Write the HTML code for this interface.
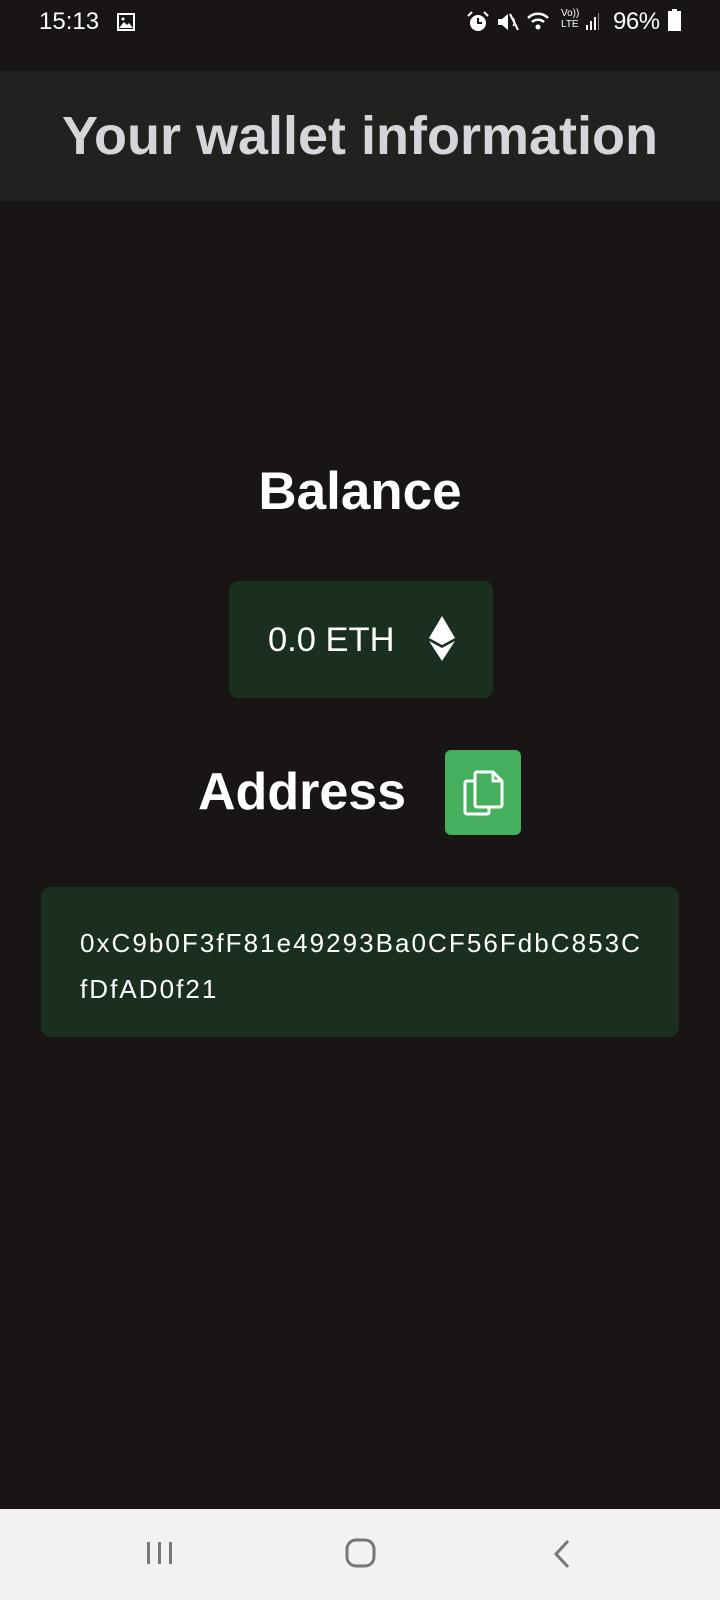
<!DOCTYPE html>
<html><head><meta charset="utf-8"><style>
*{margin:0;padding:0;box-sizing:border-box}
body{width:720px;height:1600px;background:#181514;font-family:"Liberation Sans",sans-serif;position:relative;overflow:hidden;color:#fff}
.abs{position:absolute}
.status{top:0;left:0;width:720px;height:71px;color:#fff;font-size:24px}
.header{top:71px;left:0;width:720px;height:130px;background:#232020}
.title{top:71px;left:0;width:720px;height:130px;line-height:130px;text-align:center;font-size:54px;font-weight:bold;color:#d6d5da;letter-spacing:0px}
.bal{top:462px;left:0;width:720px;text-align:center;font-size:53px;font-weight:bold;line-height:60px}
.balbox{top:581px;left:229px;width:264px;height:117px;background:#1a2f1f;border-radius:9px}
.addrbox{top:887px;left:41px;width:638px;height:150px;background:#1a2f1f;border-radius:9px}
.nav{top:1509px;left:0;width:720px;height:91px;background:#f2f2f2}
</style></head><body>
<div class="abs status">
 <div class="abs" style="left:39px;top:8px;font-size:24px">15:13</div>
 <svg class="abs" style="left:116px;top:12px" width="20" height="20" viewBox="0 0 20 20"><rect x="1" y="1" width="18" height="18" fill="#fff"/><rect x="3" y="3" width="14" height="14" fill="#181514"/><path d="M3 16 L8 10 L11 13 L13 11 L17 16Z" fill="#fff"/><circle cx="7" cy="7" r="1.5" fill="#fff"/></svg>
 <svg class="abs" style="left:466px;top:10px" width="24" height="24" viewBox="0 0 24 24"><circle cx="12" cy="13" r="8" fill="#fff"/><path d="M12 8 V13 H16" stroke="#181514" stroke-width="2" fill="none"/><path d="M2 6 L6 2 M22 6 L18 2" stroke="#fff" stroke-width="2"/></svg>
 <svg class="abs" style="left:496px;top:10px" width="24" height="24" viewBox="0 0 24 24"><path d="M2 9 H6 L12 4 V20 L6 15 H2Z" fill="#fff"/><path d="M14 4 L22 20" stroke="#fff" stroke-width="2"/><path d="M17 8 Q20 12 17 16" stroke="#fff" stroke-width="1.5" fill="none"/></svg>
 <svg class="abs" style="left:526px;top:10px" width="26" height="22" viewBox="0 0 26 22"><path d="M2 8 A14 14 0 0 1 22 8" stroke="#fff" stroke-width="2.5" fill="none"/><path d="M6 12 A9 9 0 0 1 18 12" stroke="#fff" stroke-width="2.5" fill="none"/><circle cx="12" cy="17" r="2.5" fill="#fff"/></svg>
 <div class="abs" style="left:561px;top:8px;font-size:10px;line-height:11px">Vo))<br>LTE</div>
 <svg class="abs" style="left:586px;top:12px" width="14" height="18"><rect x="0" y="13" width="2" height="5" fill="#fff"/><rect x="4" y="9" width="2" height="9" fill="#fff"/><rect x="8" y="5" width="2" height="13" fill="#fff"/><rect x="12" y="1" width="1" height="17" fill="#888"/></svg>
 <div class="abs" style="left:613px;top:8px;font-size:24px;letter-spacing:-0.5px">96%</div>
 <svg class="abs" style="left:668px;top:9px" width="13" height="22"><rect x="4" y="0" width="5" height="3" fill="#fff"/><rect x="0" y="2" width="13" height="20" fill="#fff"/></svg>
</div>
<div class="abs header"></div>
<div class="abs title">Your wallet information</div>
<div class="abs bal">Balance</div>
<div class="abs balbox"></div>
<div class="abs" style="top:621px;left:268px;font-size:34.5px;line-height:38px">0.0 ETH</div>
<svg class="abs" style="left:428px;top:616px" width="28" height="45" viewBox="0 0 28 45"><path d="M14 0 L27 22 L14 29 L1 22Z" fill="#fff"/><path d="M1 25 L14 32 L27 25 L14 45Z" fill="#fff"/></svg>
<div class="abs" style="top:762px;left:198px;font-size:52px;font-weight:bold;line-height:60px">Address</div>
<div class="abs" style="top:750px;left:445px;width:76px;height:85px;background:#44b05e;border-radius:6px"></div>
<svg class="abs" style="left:463px;top:770px" width="42" height="46" viewBox="0 0 42 46"><path d="M12 11 H4 A2 2 0 0 0 2 13 V42 A2 2 0 0 0 4 44 H24 A2 2 0 0 0 26 42 V37" stroke="#fff" stroke-width="3" fill="none"/><path d="M14 2 H30 L39 11 V35 A2 2 0 0 1 37 37 H14 A2 2 0 0 1 12 35 V4 A2 2 0 0 1 14 2Z M30 2 V11 H39" stroke="#fff" stroke-width="3" fill="none" stroke-linejoin="round"/></svg>
<div class="abs addrbox"></div>
<div class="abs" style="top:920px;left:80px;font-size:26px;line-height:46px;white-space:nowrap;letter-spacing:2.05px">0xC9b0F3fF81e49293Ba0CF56FdbC853C<br>fDfAD0f21</div>
<div class="abs nav"></div>
<svg class="abs" style="left:145px;top:1540px" width="30" height="26"><rect x="2" y="2" width="3" height="22" fill="#777"/><rect x="13" y="2" width="3" height="22" fill="#777"/><rect x="24" y="2" width="3" height="22" fill="#777"/></svg>
<svg class="abs" style="left:345px;top:1538px" width="32" height="30"><rect x="2" y="2" width="27" height="26" rx="9" stroke="#777" stroke-width="3" fill="none"/></svg>
<svg class="abs" style="left:552px;top:1539px" width="20" height="30"><path d="M16 2 L4 15 L16 28" stroke="#777" stroke-width="3" fill="none"/></svg>
</body></html>
